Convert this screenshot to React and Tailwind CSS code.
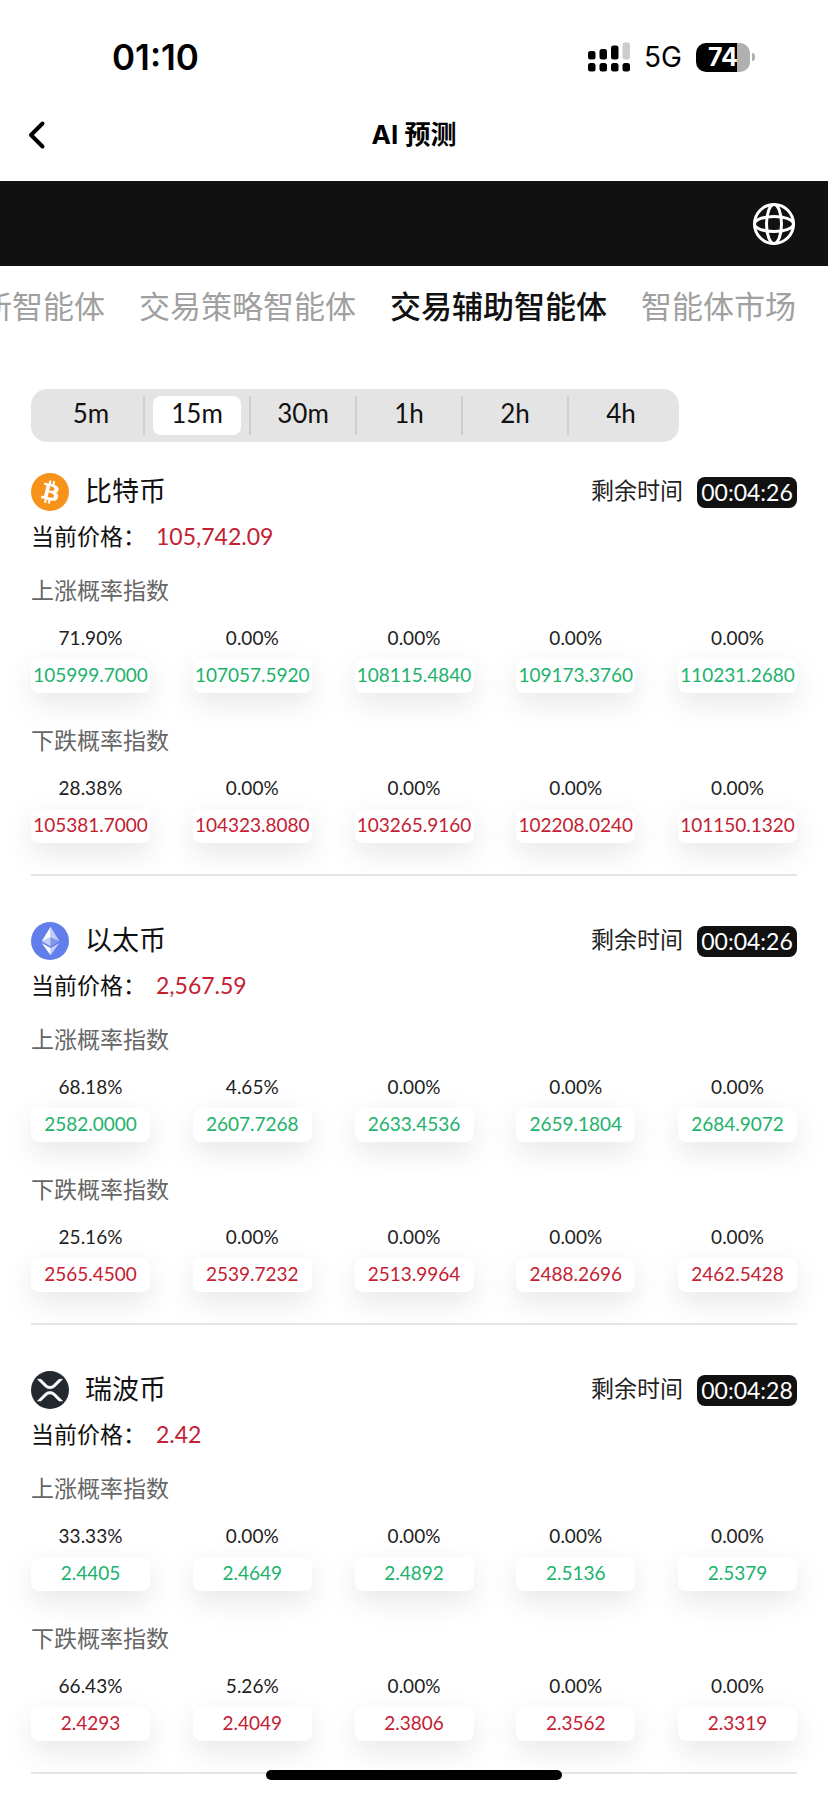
import React, { useState } from 'react';

const tabs = ['创新智能体', '交易策略智能体', '交易辅助智能体', '智能体市场'];
const periods = ['5m', '15m', '30m', '1h', '2h', '4h'];

const coins = [
  {
    name: '比特币',
    Icon: BtcIcon,
    price: '105,742.09',
    countdown: '00:04:26',
    up: [
      ['71.90%', '105999.7000'],
      ['0.00%', '107057.5920'],
      ['0.00%', '108115.4840'],
      ['0.00%', '109173.3760'],
      ['0.00%', '110231.2680'],
    ],
    down: [
      ['28.38%', '105381.7000'],
      ['0.00%', '104323.8080'],
      ['0.00%', '103265.9160'],
      ['0.00%', '102208.0240'],
      ['0.00%', '101150.1320'],
    ],
  },
  {
    name: '以太币',
    Icon: EthIcon,
    price: '2,567.59',
    countdown: '00:04:26',
    up: [
      ['68.18%', '2582.0000'],
      ['4.65%', '2607.7268'],
      ['0.00%', '2633.4536'],
      ['0.00%', '2659.1804'],
      ['0.00%', '2684.9072'],
    ],
    down: [
      ['25.16%', '2565.4500'],
      ['0.00%', '2539.7232'],
      ['0.00%', '2513.9964'],
      ['0.00%', '2488.2696'],
      ['0.00%', '2462.5428'],
    ],
  },
  {
    name: '瑞波币',
    Icon: XrpIcon,
    price: '2.42',
    countdown: '00:04:28',
    up: [
      ['33.33%', '2.4405'],
      ['0.00%', '2.4649'],
      ['0.00%', '2.4892'],
      ['0.00%', '2.5136'],
      ['0.00%', '2.5379'],
    ],
    down: [
      ['66.43%', '2.4293'],
      ['5.26%', '2.4049'],
      ['0.00%', '2.3806'],
      ['0.00%', '2.3562'],
      ['0.00%', '2.3319'],
    ],
  },
];

function BtcIcon() {
  return (
    <svg viewBox="0 0 32 32" className="size-[38px]" aria-hidden="true">
      <circle cx="16" cy="16" r="16" fill="#F7931A" />
      <path
        fill="#fff"
        d="M23.189 14.02c.314-2.096-1.283-3.223-3.465-3.975l.708-2.84-1.728-.43-.69 2.765c-.454-.114-.92-.22-1.385-.326l.695-2.783L15.596 6l-.708 2.839c-.376-.086-.746-.17-1.104-.26l.002-.009-2.384-.595-.46 1.846s1.283.294 1.256.312c.7.175.826.638.805 1.006l-.806 3.235c.048.012.11.03.18.057l-.183-.045-1.13 4.532c-.086.212-.303.531-.793.41.018.025-1.256-.313-1.256-.313l-.858 1.978 2.25.561c.418.105.828.215 1.231.318l-.715 2.872 1.727.43.708-2.84c.472.127.93.245 1.378.357l-.706 2.828 1.728.43.715-2.866c2.948.558 5.164.333 6.097-2.333.752-2.146-.037-3.385-1.588-4.192 1.13-.26 1.98-1.003 2.207-2.538zm-3.95 5.538c-.533 2.147-4.148.986-5.32.695l.95-3.805c1.172.293 4.929.872 4.37 3.11zm.535-5.569c-.487 1.953-3.495.96-4.47.717l.86-3.45c.975.243 4.118.696 3.61 2.733z"
      />
    </svg>
  );
}

function EthIcon() {
  return (
    <svg viewBox="0 0 32 32" className="size-[38px]" aria-hidden="true">
      <circle cx="16" cy="16" r="16" fill="#627EEA" />
      <g fill="#fff">
        <path fillOpacity=".602" d="M16.498 4v8.87l7.497 3.35z" />
        <path d="M16.498 4L9 16.22l7.498-3.35z" />
        <path fillOpacity=".602" d="M16.498 21.968v6.027L24 17.616z" />
        <path d="M16.498 27.995v-6.028L9 17.616z" />
        <path fillOpacity=".2" d="M16.498 20.573l7.497-4.353-7.497-3.348z" />
        <path fillOpacity=".602" d="M9 16.22l7.498 4.353v-7.701z" />
      </g>
    </svg>
  );
}

function XrpIcon() {
  return (
    <svg viewBox="0 0 32 32" className="size-[38px]" aria-hidden="true">
      <circle cx="16" cy="16" r="16" fill="#23292F" />
      <path
        fill="#fff"
        stroke="#fff"
        strokeWidth=".5"
        d="M23.570 7h3l-6.315 6.257a6 6 0 01-8.490 0L5.435 7H8.430l4.870 4.823a3.850 3.850 0 005.400 0L23.570 7zM8.395 25.263H5.400l6.355-6.293a6 6 0 018.490 0L26.600 25.262h-2.995L18.700 20.400a3.850 3.850 0 00-5.400 0l-4.910 4.863z"
      />
    </svg>
  );
}

function StatusBar() {
  return (
    <div className="flex h-[94px] items-center justify-between pt-5 pr-[73px] pl-[112px] font-['Inter',sans-serif] text-black">
      <span className="text-[35px] leading-10 font-semibold">01:10</span>
      <div className="flex items-center">
        <svg viewBox="0 0 42 30" className="h-[30px] w-[42px]" aria-hidden="true">
          <rect x="0" y="9" width="7.500" height="8.500" rx="2.5" />
          <rect x="11.5" y="7" width="7.500" height="10.500" rx="2.5" />
          <rect x="23" y="3.500" width="7.500" height="14" rx="2.5" />
          <rect x="34.500" y="0.500" width="7.500" height="17" rx="2.5" fill="#ccc" />
          <rect x="0" y="21" width="7.500" height="8.500" rx="2.5" />
          <rect x="11.5" y="21" width="7.500" height="8.500" rx="2.5" />
          <rect x="23" y="21" width="7.500" height="8.500" rx="2.5" />
          <rect x="34.500" y="21" width="7.500" height="8.500" rx="2.5" />
        </svg>
        <span className="ml-3.5 text-[28px] leading-8">5G</span>
        <span className="ml-3.5 flex h-[29px] w-[54px] items-center justify-center rounded-[10px] bg-linear-to-r from-black from-75% to-[#b0b0b0] to-75% text-[25px] leading-7 font-bold text-white">
          74
        </span>
        <span className="ml-0.5 h-2 w-[3px] rounded-r-full bg-[#b0b0b0]" />
      </div>
    </div>
  );
}

function IndexRow({ title, items, color }) {
  return (
    <>
      <h3 className="text-[23px] leading-7 text-[#666]">{title}</h3>
      <ul className="mt-[22px] flex justify-between">
        {items.map(([percent, value], index) => (
          <li key={index} className="flex w-[119px] flex-col items-center gap-[9px]">
            <span className="text-[19px] leading-6 text-[#222]">{percent}</span>
            <span className={`h-[34px] w-full rounded-lg bg-white text-center text-[19px] leading-8 shadow-[0_10px_30px_rgba(0,0,0,0.1)] ${color}`}>
              {value}
            </span>
          </li>
        ))}
      </ul>
    </>
  );
}

function CoinCard({ coin }) {
  const { Icon } = coin;
  return (
    <section className="overflow-hidden px-[31px]">
      <div className="flex h-[38px] items-center justify-between">
        <div className="flex items-center gap-4">
          <Icon />
          <h2 className="pb-0.5 text-[27px] leading-9 text-[#111]">{coin.name}</h2>
        </div>
        <div className="flex items-center gap-3.5">
          <span className="pb-1 text-[23px] leading-8 text-[#222]">剩余时间</span>
          <time className="w-[100px] rounded-lg bg-[#111] text-center text-[23px] leading-[31px] text-white">
            {coin.countdown}
          </time>
        </div>
      </div>
      <p className="mt-2.5 text-[23px] leading-[30px] text-[#111]">
        当前价格：
        <span className="ml-2.5 text-[#c42032]">{coin.price}</span>
      </p>
      <div className="mt-[25px] flex flex-col">
        <IndexRow title="上涨概率指数" items={coin.up} color="text-[#20b26c]" />
      </div>
      <div className="mt-[33px] flex flex-col">
        <IndexRow title="下跌概率指数" items={coin.down} color="text-[#c42032]" />
      </div>
      <hr className="mt-[31px] border-t-2 border-[#e5e5e5]" />
    </section>
  );
}

function App() {
  const [tab, setTab] = useState('交易辅助智能体');
  const [period, setPeriod] = useState('15m');

  return (
    <div className="min-h-screen bg-white font-['Lato','Noto_Sans_CJK_SC',sans-serif]">
      <StatusBar />

      <header className="grid h-[87px] grid-cols-3 items-center px-[27px] pb-1.5">
        <button aria-label="返回" className="w-8">
          <svg viewBox="0 0 20 30" className="h-[30px] w-5" fill="none" stroke="#000" strokeWidth="4" strokeLinecap="round" strokeLinejoin="round">
            <path d="M15.500 3.500 4 15l11.500 11.500" />
          </svg>
        </button>
        <h1 className="text-center font-['Inter','Noto_Sans_CJK_SC',sans-serif] text-[26px] leading-9 font-bold text-black">AI 预测</h1>
      </header>

      <div className="flex h-[85px] items-center justify-end bg-[#111] pr-8">
        <button aria-label="语言">
          <svg viewBox="0 0 44 44" className="size-11" fill="none" stroke="#fff" strokeWidth="3">
            <circle cx="22" cy="22" r="19.500" />
            <ellipse cx="22" cy="22" rx="7.500" ry="19.500" />
            <ellipse cx="22" cy="22" rx="19.500" ry="7.500" />
          </svg>
        </button>
      </div>

      <nav className="flex justify-end gap-[34px] overflow-hidden px-8 pt-[18px]">
        {tabs.map((item) => (
          <button
            key={item}
            onClick={() => setTab(item)}
            className={`shrink-0 text-[31px] leading-11 whitespace-nowrap ${item === tab ? 'font-medium text-[#111]' : 'text-[#a0a0a0]'}`}
          >
            {item}
          </button>
        ))}
      </nav>

      <div className="mx-[31px] mt-[61px] mb-[31px] flex h-[53px] w-fit items-center rounded-2xl bg-[#e4e4e4] pr-1 pl-2">
        {periods.map((item) => (
          <div key={item} className="flex h-[39px] w-[106px] border-r-2 border-[#cfcfcf] px-2 last:border-transparent">
            <button
              onClick={() => setPeriod(item)}
              className={`w-full rounded-lg pb-1 text-[26px] leading-[35px] text-[#111] ${item === period ? 'bg-white' : ''}`}
            >
              {item}
            </button>
          </div>
        ))}
      </div>

      <main className="flex flex-col gap-[46px] pb-5">
        {coins.map((coin) => (
          <CoinCard key={coin.name} coin={coin} />
        ))}
      </main>

      <div className="fixed bottom-[15px] left-1/2 h-2.5 w-[296px] -translate-x-1/2 rounded-full bg-black" />
    </div>
  );
}

export default App;
